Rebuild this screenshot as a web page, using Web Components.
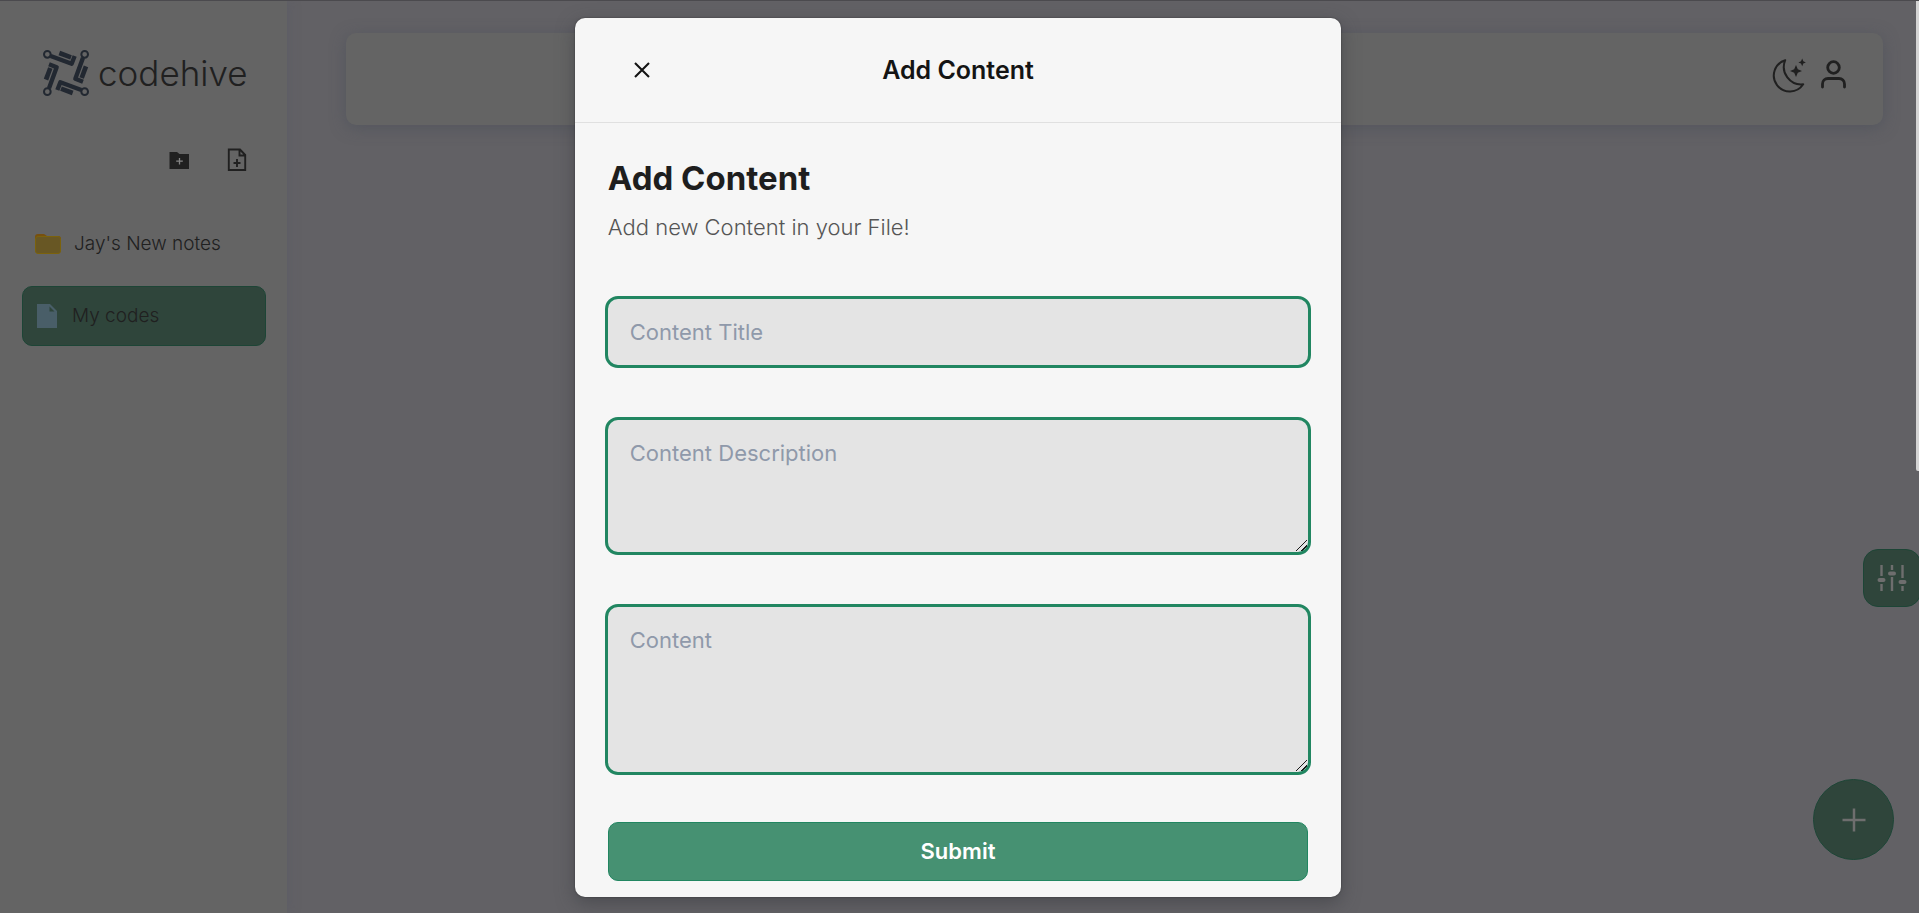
<!DOCTYPE html>
<html lang="en">
<head>
<meta charset="utf-8">
<meta name="viewport" content="width=device-width, initial-scale=1">
<title>codehive</title>
<style>
  html { height: 100%; }
  body {
    margin: 0;
    min-height: 100%;
    display: grid;
    background: #626165;
    font-family: Inter, "Liberation Sans", sans-serif;
    --panel: #646464;
    --ink: #202020;
    --green-dim: #2f453b;
    --green-dim-edge: #1d4536;
    --green: #469172;
    --green-edge: #218661;
    --paper: #f6f6f6;
    --field: #e4e4e4;
  }
</style>
</head>
<body>
<hive-app></hive-app>

<script>
const define = (name, html, setup) => {
  const template = document.createElement('template');
  template.innerHTML = html;
  customElements.define(name, class extends HTMLElement {
    constructor() {
      super();
      this.attachShadow({ mode: 'open' }).append(template.content.cloneNode(true));
    }
    connectedCallback() { if (setup) setup(this, this.shadowRoot); }
  });
};

define('hive-logo', `
  <style>
    :host { display: block; }
    a { display: flex; align-items: center; gap: 9px; color: var(--ink); text-decoration: none; font-size: 35px; line-height: 48px; font-weight: 300; }
    svg { width: 46px; height: 46px; flex: none; }
  </style>
  <a href="#">
    <svg viewBox="-69 -69 138 138" aria-hidden="true" fill="none" stroke="#222831">
      <defs>
        <g id="arm">
          <circle cx="-56" cy="-56" r="10" stroke-width="6"/>
          <path d="M-46-51L17-28L26-51" stroke-width="13" stroke-linejoin="round"/>
          <path d="M-20-60L15-47" stroke-width="14"/>
        </g>
      </defs>
      <use href="#arm"/><use href="#arm" transform="rotate(90)"/>
      <use href="#arm" transform="rotate(180)"/><use href="#arm" transform="rotate(270)"/>
    </svg>
    <span>codehive</span>
  </a>`);

define('hive-item', `
  <style>
    :host { display: block; }
    a { display: flex; align-items: center; gap: 13px; height: 58px; padding: 0 12px; border: 1px solid transparent; border-radius: 10px; color: var(--ink); text-decoration: none; font-size: 19px; line-height: 24px; font-weight: 300; }
    :host([active]) a { background: var(--green-dim); border-color: var(--green-dim-edge); }
    ::slotted(svg) { flex: none; }
  </style>
  <a href="#"><slot name="icon"></slot><slot></slot></a>`);

define('hive-sidebar', `
  <style>
    :host { display: flex; flex-direction: column; background: var(--panel); box-shadow: 0 0 12px rgba(80, 82, 105, .35); }
    hive-logo { padding: 48px 0 0 43px; }
    .tools { display: flex; justify-content: flex-end; gap: 34px; padding: 47px 38px 0 0; }
    button { display: block; padding: 0; border: 0; background: none; color: var(--ink); }
    svg { display: block; }
    nav { display: grid; gap: 12px; padding: 38px 21px 0 22px; }
  </style>
  <hive-logo></hive-logo>
  <div class="tools">
    <button aria-label="New folder"><svg width="24" height="32" viewBox="0 0 24 32"><path fill="currentColor" d="M2.500 8h7.500l2.500 2h9.500v15H2.500z"/><path stroke="#858585" stroke-width="1.3" d="M12.500 14v6.500M9.200 17.200h6.600"/></svg></button>
    <button aria-label="New file"><svg width="24" height="32" viewBox="0 0 24 32" fill="none" stroke="currentColor" stroke-width="1.9"><path d="M3.800 5.500h11.200l5.200 5.500v15H3.800zM14.500 6v5.500h5.500M12 15v8M8.500 19h7"/></svg></button>
  </div>
  <nav>
    <hive-item><svg slot="icon" width="26" height="22" viewBox="0 0 26 22"><path fill="#77500f" d="M0 4a3 3 0 0 1 3-3h6l3 2h11a3 3 0 0 1 3 3v4H0z"/><rect x=".5" y="3.500" width="25" height="17" rx="2.500" fill="#685724" stroke="#7b620c"/></svg>Jay's New notes</hive-item>
    <hive-item active><svg slot="icon" width="24" height="26" viewBox="0 0 24 26"><path fill="#495e68" d="M2 1h13l7 7v17H2z"/><path fill="#2f453b" d="M14.500 3.500v5h5z"/></svg>My codes</hive-item>
  </nav>`);

define('hive-topbar', `
  <style>
    :host { display: flex; justify-content: flex-end; align-items: center; gap: 13px; min-height: 92px; padding: 0 34px 9px; box-sizing: border-box; border-radius: 10px; background: var(--panel); box-shadow: 0 3px 15px rgba(70, 76, 88, .5); }
    button { display: block; padding: 0; border: 0; background: none; color: var(--ink); }
    svg { display: block; fill: none; stroke: currentColor; }
  </style>
  <button aria-label="Dark mode"><svg width="36" height="36" viewBox="0 0 36 36"><path stroke-width="2" stroke-linejoin="round" d="M15.200 3.200A16 16 0 1 0 33.200 27.300A17.500 17.500 0 0 1 15.200 3.200z"/><path fill="currentColor" stroke="none" d="M26 8l1.800 4.300L32 14l-4.200 1.800L26 20l-1.800-4.200L20 14l4.200-1.700zM32.200 1.600l1.100 2.700 2.600 1.100-2.600 1.200-1.100 2.600-1.200-2.600-2.600-1.200L31 4.300z"/></svg></button>
  <button aria-label="Profile"><svg width="30" height="36" viewBox="0 0 30 36" stroke-width="2.800" stroke-linecap="round"><circle cx="14.500" cy="10.500" r="5.800"/><path d="M3.500 30v-3a5.500 5.500 0 0 1 5.500-5.500h11a5.500 5.500 0 0 1 5.500 5.500v3"/></svg></button>`);

define('hive-floating', `
  <style>
    :host { position: absolute; display: block; }
    button { display: grid; place-items: center; width: 100%; height: 100%; padding: 0; border: 1px solid var(--green-dim-edge); border-radius: inherit; background: var(--green-dim); color: #6e6e6e; }
  </style>
  <button><slot></slot></button>`,
  (host, root) => root.querySelector('button').setAttribute('aria-label', host.getAttribute('label')));

define('hive-field', `
  <style>
    :host { display: block; }
    input, textarea { display: block; width: 100%; box-sizing: border-box; margin: 0; padding: 19px 22px; border: 0; border-radius: 10px; outline: 3px solid var(--green-edge); background: var(--field); color: #222; font: 400 22px/28px Inter, "Liberation Sans", sans-serif; }
    ::placeholder { color: #8f99aa; opacity: 1; }
    ::-webkit-resizer { background: linear-gradient(135deg, transparent 46%, #1a1a1a 46% 54%, transparent 54% 72%, #1a1a1a 72% 80%, transparent 80%) 3px 3px / 11px 11px no-repeat; }
  </style>`,
  (host, root) => {
    const rows = host.getAttribute('rows');
    const control = document.createElement(rows ? 'textarea' : 'input');
    control.placeholder = host.getAttribute('label');
    control.setAttribute('aria-label', control.placeholder);
    if (rows) control.style.height = rows;
    root.append(control);
  });

define('hive-dialog', `
  <style>
    :host { display: block; background: var(--paper); border-radius: 10px; color: #141414; box-shadow: 0 0 2px rgba(0, 0, 0, .4), 0 6px 18px rgba(60, 62, 66, .6); }
    header { display: grid; grid-template-columns: 1fr auto 1fr; align-items: center; min-height: 104px; padding: 0 54px; border-bottom: 1px solid #e0e0e0; }
    button { font: inherit; }
    .close { justify-self: start; display: block; padding: 0; border: 0; background: none; color: #141414; }
    .close svg { display: block; }
    h1, h2, p { margin: 0; }
    h2 { font-size: 25px; line-height: 32px; font-weight: 600; }
    .body { padding: 35px 33px 16px; }
    h1 { font-size: 33px; line-height: 40px; font-weight: 700; color: #1e1e1e; }
    p { padding-top: 13px; font-size: 22px; line-height: 32px; font-weight: 300; color: #555; }
    form { display: grid; gap: 55px; padding-top: 56px; }
    .submit { margin-top: -5px; height: 59px; padding: 0 0 2px; border: 1px solid var(--green-edge); border-radius: 10px; background: var(--green); color: #fff; font-size: 22px; font-weight: 600; }
  </style>
  <header>
    <button class="close" aria-label="Close"><svg width="26" height="26" viewBox="0 0 26 26"><path d="M6 6l14 14M20 6L6 20" stroke="currentColor" stroke-width="2.100"/></svg></button>
    <h2>Add Content</h2>
  </header>
  <div class="body">
    <h1>Add Content</h1>
    <p>Add new Content in your File!</p>
    <form>
      <hive-field label="Content Title"></hive-field>
      <hive-field label="Content Description" rows="132px"></hive-field>
      <hive-field label="Content" rows="165px"></hive-field>
      <button class="submit" type="button">Submit</button>
    </form>
  </div>`);

define('hive-app', `
  <style>
    :host { position: relative; display: grid; grid-template-columns: 15% 1fr; padding-right: 3px; border-top: 1px solid #4b4a4e; box-sizing: border-box; overflow: hidden; }
    main { padding: 32px 33px 32px 59px; }
    .overlay { position: absolute; inset: 0 3px 0 0; display: flex; justify-content: center; align-items: flex-start; padding-top: 17px; }
    hive-dialog { width: 40%; }
    .thumb { position: absolute; top: 0; right: 0; width: 3px; height: 470px; border-radius: 0 0 0 2px; background: #d4d4d4; }
    .filter { right: -2px; top: 548px; width: 58px; height: 58px; border-radius: 15px; }
    .add { right: 25px; bottom: 53px; width: 81px; height: 81px; border-radius: 50%; }
  </style>
  <hive-sidebar></hive-sidebar>
  <main><hive-topbar></hive-topbar></main>
  <hive-floating class="filter" label="Filters"><svg width="30" height="28" viewBox="0 0 30 28" stroke="currentColor" fill="none"><path stroke-width="2.400" d="M4.500 1v11M4.500 20v7M15 1v5M15 13v14M25.500 1v13M25.500 22v5"/><path stroke-width="4" stroke-linecap="round" d="M2.500 16h4M13 9.500h4M23.500 18h4"/></svg></hive-floating>
  <hive-floating class="add" label="Add"><svg width="24" height="24" viewBox="0 0 24 24"><path stroke="currentColor" stroke-width="2.500" d="M12 .5v23M.5 12h23"/></svg></hive-floating>
  <div class="overlay"><hive-dialog role="dialog" aria-label="Add Content"></hive-dialog></div>
  <div class="thumb"></div>`);
</script>
</body>
</html>
